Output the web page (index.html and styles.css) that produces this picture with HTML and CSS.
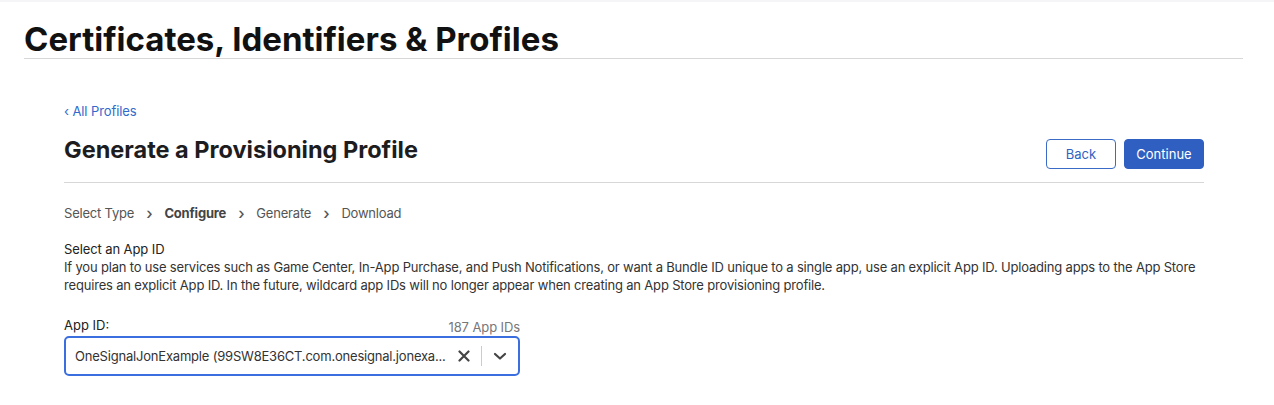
FILE: index.html
```html
<!DOCTYPE html>
<html lang="en">
<head>
<meta charset="utf-8">
<title>Certificates, Identifiers &amp; Profiles</title>
<link rel="stylesheet" href="styles.css">
</head>
<body>
<div class="topstrip"></div>
<header class="page-header">
  <h1 class="page-title">Certificates, Identifiers &amp; Profiles</h1>
</header>
<main class="content">
  <a class="back-link" href="#">&lsaquo; All Profiles</a>
  <div class="title-row">
    <h2 class="section-title">Generate a Provisioning Profile</h2>
    <div class="actions">
      <button class="btn btn-secondary">Back</button>
      <button class="btn btn-primary">Continue</button>
    </div>
  </div>
  <nav class="steps">
    <span class="step">Select Type</span>
    <span class="sep">&rsaquo;</span>
    <span class="step current">Configure</span>
    <span class="sep">&rsaquo;</span>
    <span class="step">Generate</span>
    <span class="sep">&rsaquo;</span>
    <span class="step">Download</span>
  </nav>
  <section class="desc">
    <div class="desc-title">Select an App ID</div>
    <p class="desc-text">If you plan to use services such as Game Center, In-App Purchase, and Push Notifications, or want a Bundle ID unique to a single app, use an explicit App ID. Uploading apps to the App Store requires an explicit App ID. In the future, wildcard app IDs will no longer appear when creating an App Store provisioning profile.</p>
  </section>
  <div class="field">
    <div class="field-head">
      <label class="field-label">App ID:</label>
      <span class="field-count">187 App IDs</span>
    </div>
    <div class="select">
      <span class="select-value">OneSignalJonExample (99SW8E36CT.com.onesignal.jonexa...</span>
      <span class="select-clear">
        <svg width="12" height="12" viewBox="0 0 12 12"><path d="M1.5 1.5 L10.5 10.5 M10.5 1.5 L1.5 10.5" stroke="#444" stroke-width="2.2" stroke-linecap="round"/></svg>
      </span>
      <span class="select-divider"></span>
      <span class="select-toggle">
        <svg width="14" height="10" viewBox="0 0 14 10"><path d="M2 3 L7 7.5 L12 3" fill="none" stroke="#444" stroke-width="2.2" stroke-linecap="round" stroke-linejoin="round"/></svg>
      </span>
    </div>
  </div>
</main>
</body>
</html>
```

FILE: styles.css
```css
* { box-sizing: border-box; }
html, body { margin: 0; padding: 0; background: #fff; }
body {
  font-family: Inter, "Noto Sans", "Liberation Sans", sans-serif;
  color: #1d1d1f;
  width: 1274px;
  height: 405px;
  overflow: hidden;
}
.topstrip { height: 2px; background: #f5f5f7; }
.page-header {
  margin: 0 31px 0 24px;
  border-bottom: 1px solid #d7d7d7;
  height: 57px;
  padding-top: 18px;
}
.page-title {
  margin: 0;
  font-size: 33px;
  line-height: 38px;
  font-weight: 700;
  color: #111;
  letter-spacing: 0;
}
.content {
  margin: 0 70px 0 64px;
  padding-top: 43px;
}
.back-link {
  display: block;
  font-size: 13px;
  line-height: 18px;
  color: #2f6bcd;
  text-decoration: none;
  letter-spacing: -0.1px;
}
.title-row {
  display: flex;
  align-items: flex-start;
  justify-content: space-between;
  margin-top: 15px;
  padding-bottom: 13px;
  border-bottom: 1px solid #d7d7d7;
}
.section-title {
  margin: 0;
  font-size: 23.5px;
  line-height: 30px;
  font-weight: 700;
  color: #1d1d1f;
}
.actions { display: flex; gap: 8px; margin-top: 4px; }
.btn {
  height: 30px;
  font-family: inherit;
  font-size: 13px;
  border-radius: 4px;
  padding: 0 10px;
  cursor: pointer;
}
.btn-secondary {
  width: 70px;
  background: #fff;
  color: #2f62c2;
  border: 1px solid #3a6bc6;
}
.btn-primary {
  width: 80px;
  background: #2f5fc0;
  color: #fff;
  border: 1px solid #2f5fc0;
}
.steps {
  display: flex;
  align-items: center;
  gap: 12px;
  margin-top: 21px;
  font-size: 13px;
  line-height: 18px;
  color: #555;
  letter-spacing: -0.2px;
}
.step.current { font-weight: 700; color: #444; }
.sep { color: #555; font-size: 16px; font-weight: 500; }
.desc { margin-top: 18px; }
.desc-title { font-size: 13px; line-height: 18px; color: #222; letter-spacing: -0.1px; }
.desc-text {
  margin: 0 -40px 0 0;
  font-size: 13px;
  line-height: 18px;
  color: #333;
  letter-spacing: -0.18px;
}
.field { width: 456px; margin-top: 22px; }
.field-head {
  display: flex;
  justify-content: space-between;
  align-items: flex-end;
  height: 18px;
}
.field-label { font-size: 13px; line-height: 18px; color: #222; }
.field-count { font-size: 13px; line-height: 14px; color: #777; letter-spacing: -0.1px; }
.select {
  margin-top: 2px;
  height: 40px;
  border: 2px solid #3b6fe0;
  border-radius: 5px;
  display: flex;
  align-items: center;
  padding-left: 9px;
}
.select-value {
  margin-right: auto;
  font-size: 13px;
  color: #333;
  white-space: nowrap;
  letter-spacing: -0.2px;
}
.select-clear { width: 34px; display: flex; justify-content: center; }
.select-divider { width: 1px; height: 20px; background: #ccc; }
.select-toggle { width: 36px; display: flex; justify-content: center; }
```
